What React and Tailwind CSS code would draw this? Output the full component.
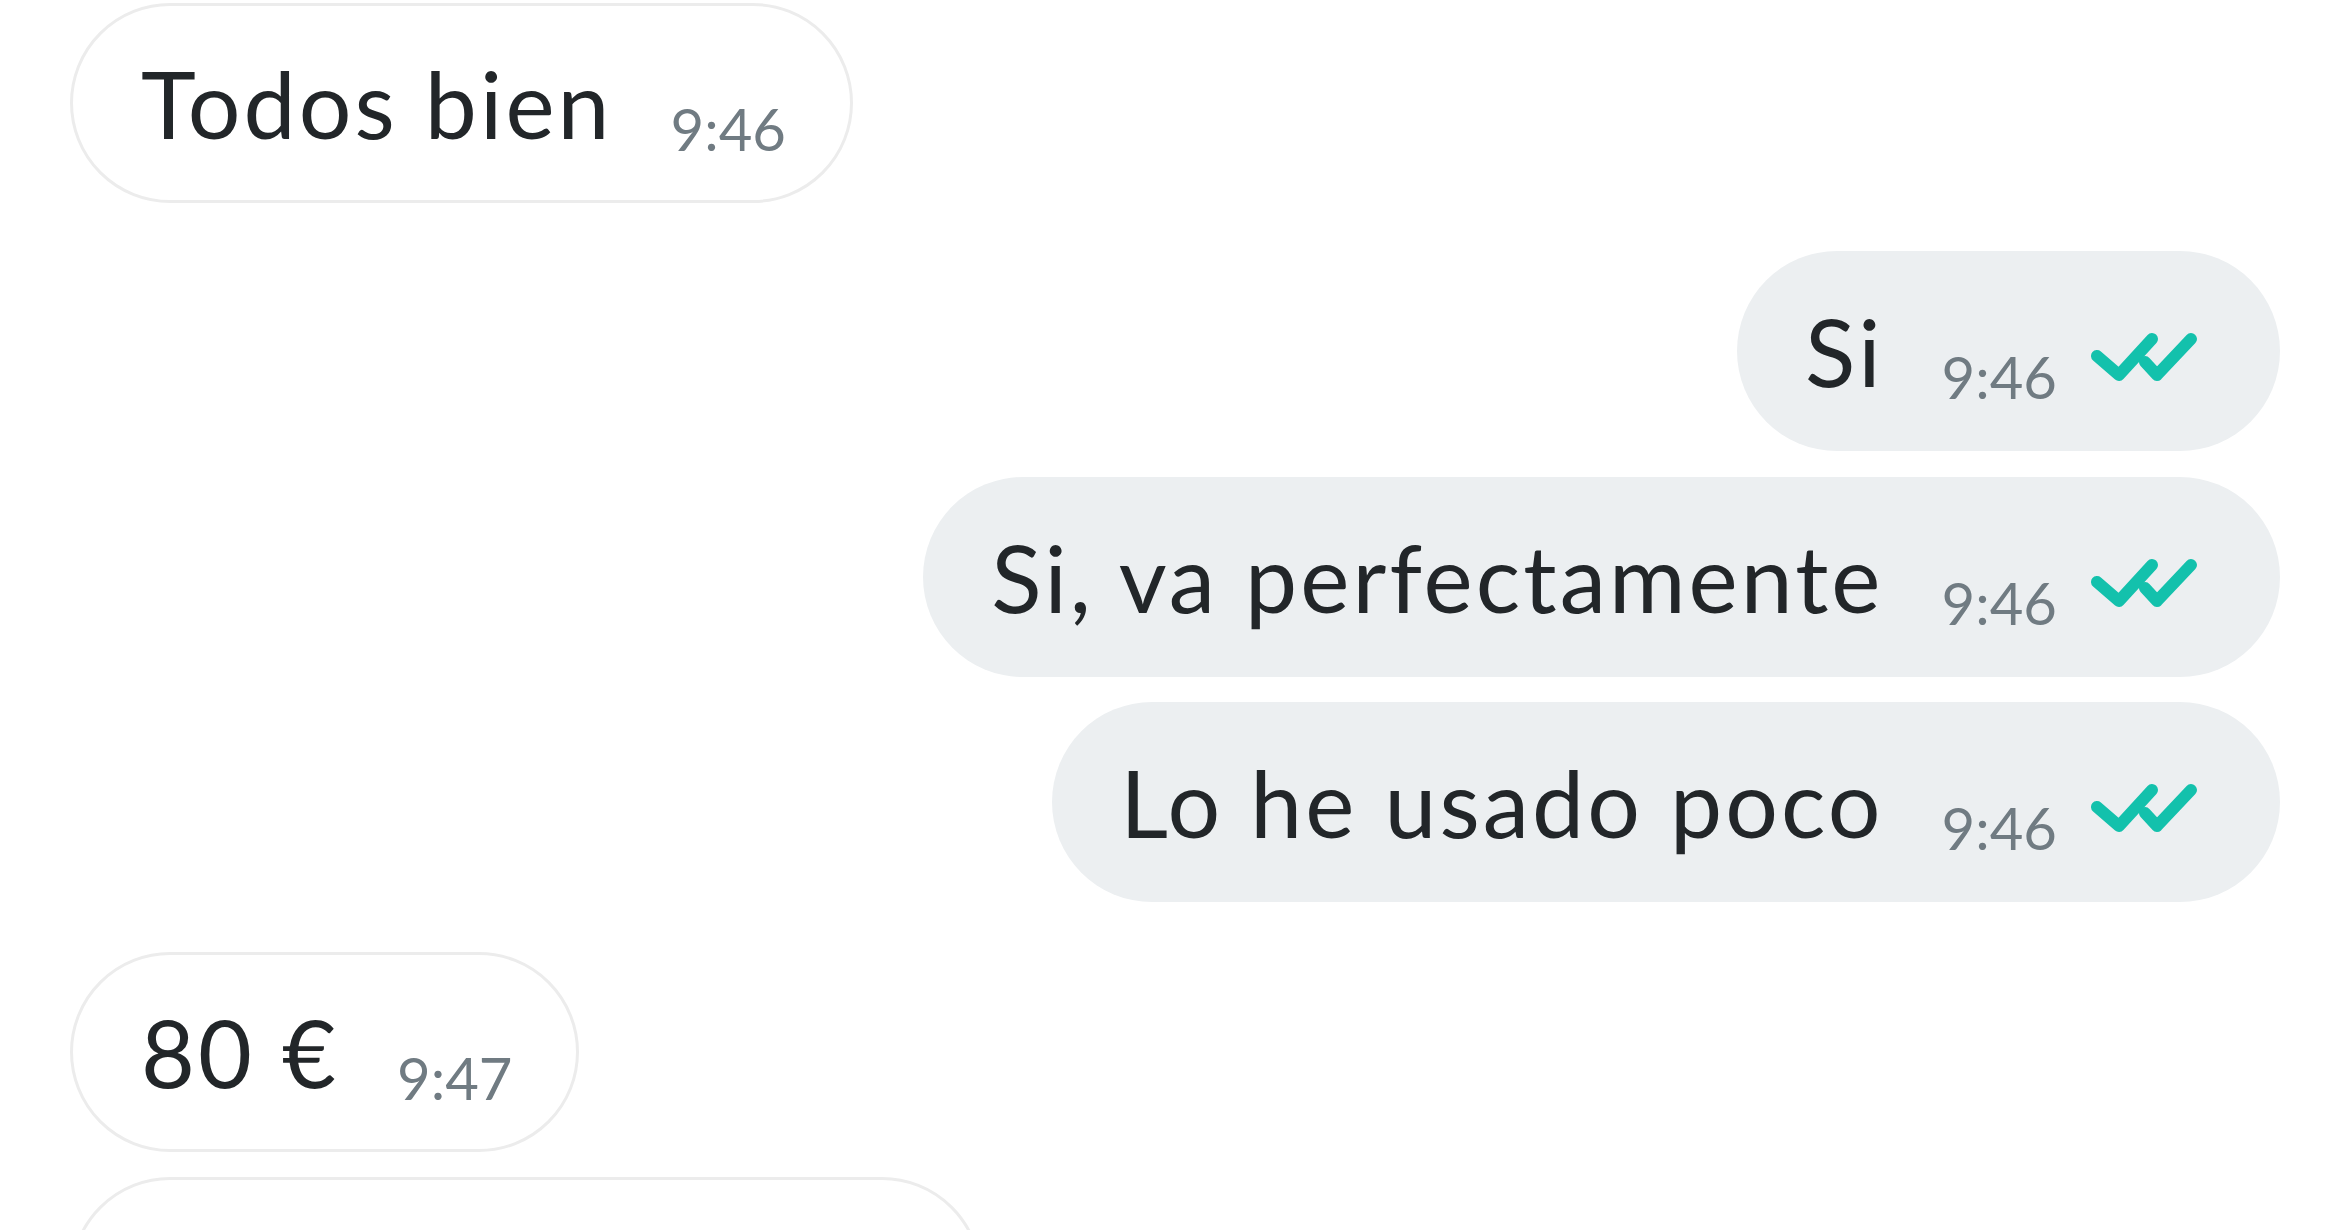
import React from 'react';

const MESSAGES = [
  { id: 1, text: 'Todos bien', time: '9:46', mine: false, gap: 'mt-[3px]' },
  { id: 2, text: 'Si', time: '9:46', mine: true, gap: 'mt-[48px]' },
  { id: 3, text: 'Si, va perfectamente', time: '9:46', mine: true, gap: 'mt-[26px]' },
  { id: 4, text: 'Lo he usado poco', time: '9:46', mine: true, gap: 'mt-[25px]' },
  { id: 5, text: '80 €', time: '9:47', mine: false, gap: 'mt-[50px]' },
];

function DoubleCheck() {
  return (
    <svg width="110" height="55" viewBox="0 0 110 55" fill="none" className="ml-[32px] shrink-0 translate-y-[6px]">
      <path d="M8 26 L30 45 L63 9" stroke="#13c1ac" strokeWidth="12" strokeLinecap="round" strokeLinejoin="round" />
      <path d="M56 32 L68 45 L102 9" stroke="#13c1ac" strokeWidth="12" strokeLinecap="round" strokeLinejoin="round" />
    </svg>
  );
}

function Bubble({ msg }) {
  const base = msg.mine
    ? 'self-end bg-[#eceff1] pr-[81px]'
    : 'self-start bg-white border-[3px] border-[#ececec] pr-[64px]';
  return (
    <div className={`${msg.gap} ${base} h-[200px] shrink-0 rounded-full pl-[68px] flex items-center`}>
      <div className="flex items-baseline">
        <span className="text-[93px] leading-none tracking-[3.1px] text-[#222629]">{msg.text}</span>
        <span className="ml-[58px] text-[58px] leading-none text-[#707b82] translate-y-[12px]">{msg.time}</span>
      </div>
      {msg.mine && <DoubleCheck />}
    </div>
  );
}

export default function App() {
  return (
    <div
      className="w-[2350px] h-[1230px] overflow-hidden bg-white px-[70px] flex flex-col"
      style={{ fontFamily: 'Lato, "Open Sans", sans-serif' }}
    >
      {MESSAGES.map(msg => (
        <Bubble key={msg.id} msg={msg} />
      ))}
      {/* next message, cut off at the bottom */}
      <div className="mt-[25px] self-start w-[912px] h-[200px] shrink-0 rounded-full bg-white border-[3px] border-[#ececec]" />
    </div>
  );
}
